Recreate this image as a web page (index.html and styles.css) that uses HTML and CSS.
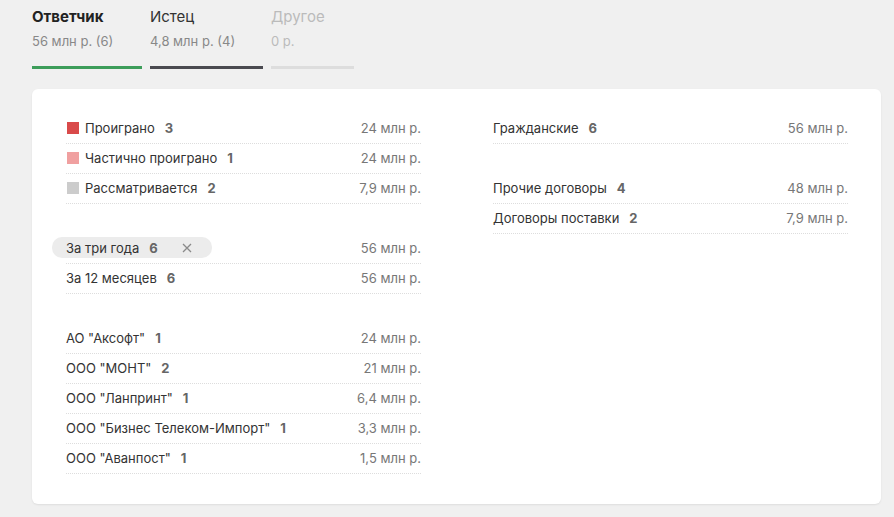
FILE: index.html
```html
<!DOCTYPE html>
<html lang="ru">
<head>
<meta charset="utf-8">
<link rel="stylesheet" href="styles.css">
</head>
<body>
<div class="tabs">
  <div class="tab tab-active" style="width:110px">
    <div class="tab-title">Ответчик</div>
    <div class="tab-sub">56 млн р. (6)</div>
    <div class="tab-bar"></div>
  </div>
  <div class="tab tab-dark" style="width:113px">
    <div class="tab-title">Истец</div>
    <div class="tab-sub">4,8 млн р. (4)</div>
    <div class="tab-bar"></div>
  </div>
  <div class="tab tab-off" style="width:83px">
    <div class="tab-title">Другое</div>
    <div class="tab-sub">0 р.</div>
    <div class="tab-bar"></div>
  </div>
</div>

<div class="card">
  <div class="col">
    <div class="group">
      <div class="row"><span class="label"><i class="sw sw-red"></i>Проиграно<b class="cnt">3</b></span><span class="val">24 млн р.</span></div>
      <div class="row"><span class="label"><i class="sw sw-pink"></i>Частично проиграно<b class="cnt">1</b></span><span class="val">24 млн р.</span></div>
      <div class="row"><span class="label"><i class="sw sw-grey"></i>Рассматривается<b class="cnt">2</b></span><span class="val">7,9 млн р.</span></div>
    </div>
    <div class="group">
      <div class="row"><span class="label chip">За три года<b class="cnt">6</b><svg class="x" width="10" height="10" viewBox="0 0 10 10"><path d="M1 1L9 9M9 1L1 9" stroke="#8a8a8a" stroke-width="1.3" fill="none"/></svg></span><span class="val">56 млн р.</span></div>
      <div class="row"><span class="label">За 12 месяцев<b class="cnt">6</b></span><span class="val">56 млн р.</span></div>
    </div>
    <div class="group">
      <div class="row"><span class="label">АО "Аксофт"<b class="cnt">1</b></span><span class="val">24 млн р.</span></div>
      <div class="row"><span class="label">ООО "МОНТ"<b class="cnt">2</b></span><span class="val">21 млн р.</span></div>
      <div class="row"><span class="label">ООО "Ланпринт"<b class="cnt">1</b></span><span class="val">6,4 млн р.</span></div>
      <div class="row"><span class="label">ООО "Бизнес Телеком-Импорт"<b class="cnt">1</b></span><span class="val">3,3 млн р.</span></div>
      <div class="row"><span class="label">ООО "Аванпост"<b class="cnt">1</b></span><span class="val">1,5 млн р.</span></div>
    </div>
  </div>
  <div class="col">
    <div class="group">
      <div class="row"><span class="label">Гражданские<b class="cnt">6</b></span><span class="val">56 млн р.</span></div>
    </div>
    <div class="group">
      <div class="row"><span class="label">Прочие договоры<b class="cnt">4</b></span><span class="val">48 млн р.</span></div>
      <div class="row"><span class="label">Договоры поставки<b class="cnt">2</b></span><span class="val">7,9 млн р.</span></div>
    </div>
  </div>
</div>
</body>
</html>
```

FILE: styles.css
```css
html, body {
  margin: 0;
  padding: 0;
}
body {
  background: #f0f0f0;
  font-family: Inter, "Noto Sans", "Liberation Sans", sans-serif;
  color: #333;
  font-size: 13px;
  height: 517px;
  overflow: hidden;
}
.tabs {
  display: flex;
  gap: 8px;
  padding: 7px 0 0 32px;
}
.tab-title {
  font-size: 15px;
  line-height: 20px;
  color: #333;
}
.tab-sub {
  margin-top: 4px;
  font-size: 13px;
  line-height: 20px;
  color: #888;
}
.tab-bar {
  margin-top: 15px;
  height: 3px;
  background: #ddd;
}
.tab-active .tab-title { font-weight: 700; color: #222; }
.tab-active .tab-bar { background: #3d9d5a; }
.tab-dark .tab-bar { background: #4a4a50; }
.tab-off .tab-title, .tab-off .tab-sub { color: #bbb; }

.card {
  margin: 20px 13px 0 32px;
  background: #fff;
  border-radius: 6px;
  box-shadow: 0 1px 2px rgba(0,0,0,0.08);
  padding: 25px 34px 0;
  display: grid;
  grid-template-columns: 355px 355px;
  column-gap: 72px;
  align-items: start;
}
.group {
  margin-bottom: 30px;
}
.row {
  box-sizing: border-box;
  height: 30px;
  padding-bottom: 2px;
  display: flex;
  align-items: center;
  justify-content: space-between;
  border-bottom: 1px dotted #ddd;
}
.label {
  display: flex;
  align-items: center;
  color: #333;
  white-space: nowrap;
}
.cnt {
  margin-left: 10px;
  font-weight: 700;
  color: #666;
}
.val {
  color: #777;
}
.sw {
  display: inline-block;
  width: 12px;
  height: 12px;
  margin: 0 6px 0 1px;
}
.sw-red { background: #d94a4a; }
.sw-pink { background: #f0a0a0; }
.sw-grey { background: #cccccc; }
.chip {
  background: #ececec;
  border-radius: 10px;
  height: 21px;
  margin-left: -14px;
  padding: 0 20px 0 14px;
}
.x {
  margin-left: 24px;
  display: block;
}
```
